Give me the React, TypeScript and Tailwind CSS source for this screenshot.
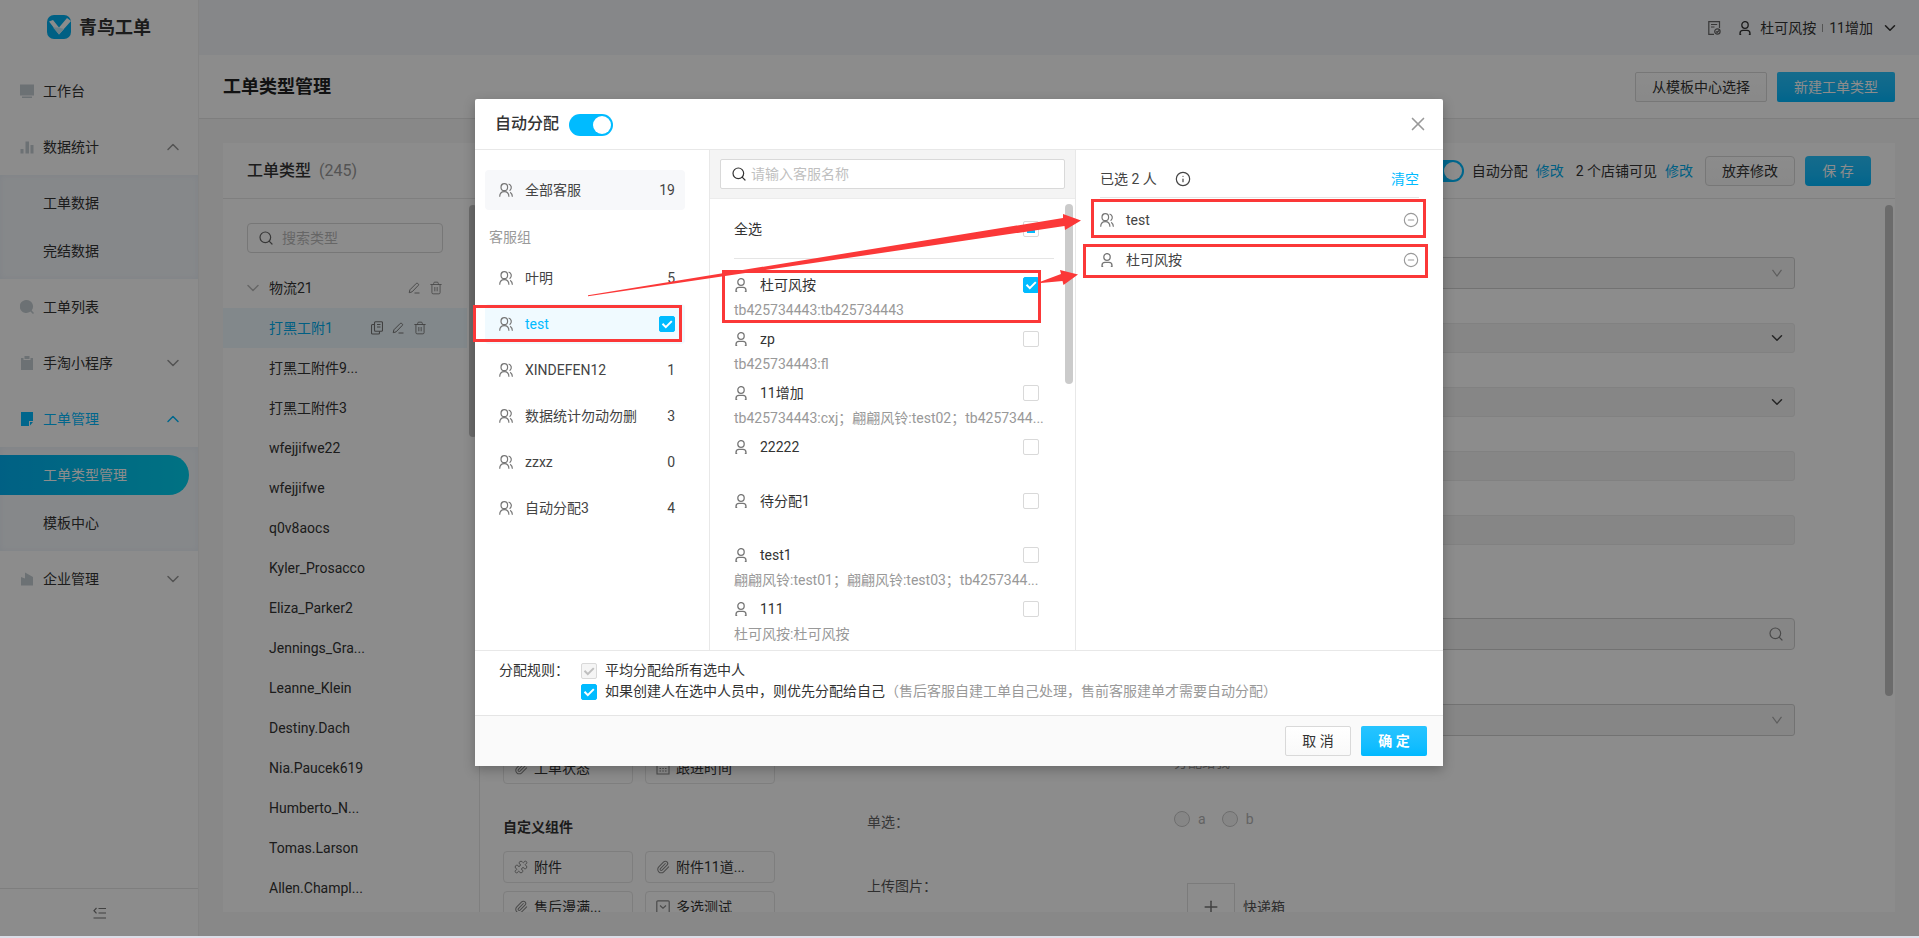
import { useState } from 'react';
import type { ReactNode } from 'react';
import { ChevronDown, ChevronUp, Search, X, Info, CircleMinus, Paperclip, Puzzle, Trash2, Plus } from 'lucide-react';
import clsx from 'clsx';

const typeNames = [
  '打黑工附件9...',
  '打黑工附件3',
  'wfejjifwe22',
  'wfejjifwe',
  'q0v8aocs',
  'Kyler_Prosacco',
  'Eliza_Parker2',
  'Jennings_Gra...',
  'Leanne_Klein',
  'Destiny.Dach',
  'Nia.Paucek619',
  'Humberto_N...',
  'Tomas.Larson',
  'Allen.Champl...',
];

const groups = [
  { name: '叶明', count: 5 },
  { name: 'test', count: 2 },
  { name: 'XINDEFEN12', count: 1 },
  { name: '数据统计勿动勿删', count: 3 },
  { name: 'zzxz', count: 0 },
  { name: '自动分配3', count: 4 },
];

const members = [
  { name: '杜可风按', accounts: 'tb425734443:tb425734443' },
  { name: 'zp', accounts: 'tb425734443:fl' },
  { name: '11增加', accounts: 'tb425734443:cxj；翩翩风铃:test02；tb4257344...' },
  { name: '22222', accounts: '' },
  { name: '待分配1', accounts: '' },
  { name: 'test1', accounts: '翩翩风铃:test01；翩翩风铃:test03；tb4257344...' },
  { name: '111', accounts: '杜可风按:杜可风按' },
];

function UserIcon({ className }: { className?: string }) {
  return (
    <svg viewBox="0 0 14 14" fill="none" stroke="currentColor" strokeWidth="1.3" className={clsx('w-[14px] h-[14px] shrink-0', className)}>
      <ellipse cx="7" cy="4" rx="3.2" ry="3.4" />
      <path d="M3.2 13.4H2v-1C2 10.300 3.200 9.400 5 9.400h4c1.800 0 3 .9 3 3v1h-1.200" />
    </svg>
  );
}

function UsersIcon({ className }: { className?: string }) {
  return (
    <svg viewBox="0 0 14 14" fill="none" stroke="currentColor" strokeWidth="1.200" className={clsx('w-[14px] h-[14px] shrink-0', className)}>
      <ellipse cx="5.300" cy="4.200" rx="3.300" ry="3.500" />
      <path d="M.7 13.800c0-3.400 2-5.200 4.600-5.200s4.600 1.800 4.600 5.200" />
      <path d="M9.600 1c3 1 3.800 4.200 1 6.700M11.200 9.200c1.400 1 2.100 2.500 2.200 4.600" />
    </svg>
  );
}

function PenIcon() {
  return (
    <svg viewBox="0 0 12 12" fill="none" stroke="currentColor" strokeWidth="1" className="w-3 h-3">
      <path d="M1.200 10.700l.7-2.900L8.300 1.400a1 1 0 011.400 0l.6.6a1 1 0 010 1.400L4 9.900zM6.500 11h5" />
    </svg>
  );
}

function CopyIcon() {
  return (
    <svg viewBox="0 0 12 14" fill="none" stroke="currentColor" strokeWidth="1.100" className="w-3 h-[14px]">
      <rect x="3.500" y=".8" width="8" height="9.500" rx="1" />
      <path d="M3.500 3.500h-2a1 1 0 00-1 1V12a1 1 0 001 1h6a1 1 0 001-1v-1.700M6 3.500h3.500M6 6h3.500" />
    </svg>
  );
}

function Checkbox({ label, checked = false, disabled = false, partial = false }: { label: string; checked?: boolean; disabled?: boolean; partial?: boolean }) {
  return (
    <span className="grid w-4 h-4 shrink-0 place-items-center">
      <input
        type="checkbox"
        aria-label={label}
        defaultChecked={checked}
        disabled={disabled}
        className="peer appearance-none col-start-1 row-start-1 w-4 h-4 rounded-[2px] border border-[#d9d9d9] bg-white checked:bg-[#00bbff] checked:border-[#00bbff] disabled:bg-[#f5f5f5] disabled:border-[#d9d9d9]"
      />
      {partial && <span className="col-start-1 row-start-1 w-2 h-2 bg-[#00bbff]" />}
      <svg viewBox="0 0 16 16" fill="none" stroke="currentColor" strokeWidth="2" className={clsx('pointer-events-none col-start-1 row-start-1 hidden w-4 h-4 peer-checked:block', disabled ? 'text-[#bfbfbf]' : 'text-white')}>
        <path d="M3.500 7.800l3.300 3.300 6-6" />
      </svg>
    </span>
  );
}

function Switch({ label }: { label: string }) {
  return (
    <input
      type="checkbox"
      role="switch"
      aria-label={label}
      defaultChecked
      className="appearance-none flex items-center justify-end w-11 h-[22px] shrink-0 rounded-full bg-[#00bbff] pr-[2px] before:block before:w-[18px] before:h-[18px] before:rounded-full before:bg-white before:content-['']"
    />
  );
}

function DefaultButton({ children, className }: { children: ReactNode; className?: string }) {
  return (
    <button className={clsx('h-[30px] rounded-[2px] border border-[#d9d9d9] bg-linear-to-b from-white to-[#f9f9f9] text-[#333]', className)}>
      {children}
    </button>
  );
}

function PrimaryButton({ children, className }: { children: ReactNode; className?: string }) {
  return (
    <button className={clsx('h-[30px] rounded-[2px] bg-linear-to-b from-[#26c4ff] to-[#00b9ff] text-white', className)}>
      {children}
    </button>
  );
}

function MenuItem({ icon, text, chevron, active }: { icon: ReactNode; text: string; chevron?: 'up' | 'down'; active?: boolean }) {
  return (
    <a href="#" className={clsx('flex h-14 items-center gap-[9px] pl-5 pr-[15px]', active ? 'text-[#00bbff]' : 'text-[#333]')}>
      <svg viewBox="0 0 14 14" fill="currentColor" className={clsx('w-[14px] h-[14px]', !active && 'text-[#c5ced3]')}>
        {icon}
      </svg>
      <span className="flex-1">{text}</span>
      {chevron === 'up' && <ChevronUp className={clsx('w-5 h-5', !active && 'text-[#999]')} strokeWidth={1.8} />}
      {chevron === 'down' && <ChevronDown className="w-5 h-5 text-[#999]" strokeWidth={1.8} />}
    </a>
  );
}

function SubMenu({ items, active }: { items: string[]; active?: string }) {
  return (
    <div className="bg-[#f5f8fc] py-1 shadow-[inset_0_0_6px_#e6eef5]">
      {items.map(item => (
        <div key={item} className="flex h-12 items-center">
          <a
            href="#"
            className={clsx(
              'flex h-10 w-[189px] items-center pl-[43px]',
              item === active ? 'rounded-r-full bg-linear-to-r from-[#00b0f0] to-[#00d0ee] text-white' : 'text-[#333]'
            )}
          >
            {item}
          </a>
        </div>
      ))}
    </div>
  );
}

function Sidebar() {
  return (
    <aside className="flex w-[199px] shrink-0 flex-col border-r border-[#f0f0f0] bg-white">
      <div className="flex h-[63px] items-start gap-2 pl-[47px] pt-[15px]">
        <svg viewBox="0 0 24 24" className="w-6 h-6">
          <rect width="24" height="24" rx="7" fill="#00b0f0" />
          <path d="M2 6.500L6 5l6 7.500L20 3l4 3-12 13.500z" fill="#fff" />
          <path d="M6 12.500l6 7 5-5.500-5-1.500z" fill="#c5e9f7" />
        </svg>
        <span className="text-lg/[26px] font-bold text-[#333]">青鸟工单</span>
      </div>
      <nav className="flex-1">
        <MenuItem text="工作台" icon={<path d="M0 .5h14v11H0zM2 12.500h10v1.500H2z" />} />
        <MenuItem text="数据统计" chevron="up" icon={<path d="M.5 9h3v4.500h-3zM5.500 1.500H9v12H5.500zM10.500 5H13.500v8.500h-3z" />} />
        <SubMenu items={['工单数据', '完结数据']} />
        <MenuItem text="工单列表" icon={<path d="M6.500 0a6.500 6.500 0 015.200 10.400L14 12.900l-1 1-2.600-2.400A6.500 6.500 0 116.500 0z" />} />
        <MenuItem text="手淘小程序" chevron="down" icon={<path d="M1 2h2.500v2h7V2H13v12H1zM4.500 0h5v3h-5z" />} />
        <MenuItem text="工单管理" chevron="up" active icon={<path d="M1 0h12v9H9v5H1zM10 10h3l-3 3.500z" />} />
        <SubMenu items={['工单类型管理', '模板中心']} active="工单类型管理" />
        <MenuItem text="企业管理" chevron="down" icon={<path d="M1 5l4 1.500V.5L13 5v8.500H1z" />} />
      </nav>
      <div className="flex h-12 items-center justify-center border-t border-[#e5e5e5]">
        <button aria-label="收起菜单">
          <svg viewBox="0 0 13 12" fill="none" stroke="#777" strokeWidth="1.200" className="w-[13px] h-3">
            <path d="M5.500 1.500H13M5.500 6H13M.5 11H13M3.500 1L1 3.700l2.500 2.700" />
          </svg>
        </button>
      </div>
    </aside>
  );
}

function TopBar() {
  return (
    <header className="flex h-[55px] shrink-0 items-center justify-end bg-[#f4f6f9] pr-5 text-[#333]">
      <svg viewBox="0 0 13 14" fill="none" stroke="#666" strokeWidth="1.200" className="mr-[17px] w-[13px] h-[14px]">
        <path d="M6 13.300H.8V.7h10.700V7M3 3.500h6.200M3 6h3.500" />
        <circle cx="9.400" cy="10.500" r="2.700" />
        <path d="M8 10.500l1.200 1 1.800-2" />
      </svg>
      <UserIcon className="mr-2" />
      <button className="flex items-center">
        <span>杜可风按</span>
        <span className="mx-[6px] h-2 w-px bg-[#999]" />
        <span>11增加</span>
        <ChevronDown className="ml-2 w-[18px] h-[18px]" />
      </button>
    </header>
  );
}

function TypeList() {
  return (
    <section className="flex w-[257px] shrink-0 flex-col border-r border-[#e8e8e8]">
      <h2 className="flex h-14 shrink-0 items-center gap-2 border-b border-[#e8e8e8] pl-6 text-base font-medium text-[#333]">
        工单类型 <span className="font-normal text-[#999]">(245)</span>
      </h2>
      <div className="flex min-h-0 flex-1">
        <div className="w-[244px] shrink-0 pt-6">
          <div className="mx-6 flex h-[30px] items-center gap-2 rounded-sm border border-[#d9d9d9] pl-[10px]">
            <Search className="w-4 h-4 shrink-0 text-[#666]" strokeWidth={1.8} />
            <input aria-label="搜索类型" placeholder="搜索类型" className="w-full min-w-0 outline-none placeholder:text-[#bbb]" />
          </div>
          <div className="mt-[15px] flex h-10 items-center pl-5">
            <ChevronDown className="mr-[6px] w-5 h-5 text-[#bbb]" strokeWidth={1.8} />
            <span className="flex-1 text-[#333]">物流21</span>
            <span className="mr-6 flex items-center gap-[9px] text-[#888]">
              <button aria-label="编辑"><PenIcon /></button>
              <button aria-label="删除"><Trash2 className="w-[14px] h-[14px]" strokeWidth={1.5} /></button>
            </span>
          </div>
          <ul className="text-[#333]">
            <li className="flex h-10 items-center bg-[#edf8fd] pl-[46px]">
              <a href="#" className="flex-1 text-[#00aeef]">打黑工附1</a>
              <span className="mr-10 flex items-center gap-[9px] text-[#777]">
                <button aria-label="复制"><CopyIcon /></button>
                <button aria-label="编辑"><PenIcon /></button>
                <button aria-label="删除"><Trash2 className="w-[14px] h-[14px]" strokeWidth={1.5} /></button>
              </span>
            </li>
            {typeNames.map(name => (
              <li key={name} className="flex h-10 items-center pl-[46px]">
                <a href="#">{name}</a>
              </li>
            ))}
          </ul>
        </div>
        <div className="ml-[2px] mt-[6px] h-[232px] w-2 rounded-full bg-[#c4c4c4]" />
      </div>
    </section>
  );
}

function ComponentTile({ icon, text }: { icon: ReactNode; text: string }) {
  return (
    <button className="flex h-8 items-center gap-[6px] rounded-sm border border-[#e5e5e5] pl-[10px] text-[#333]">
      <span className="text-[#888]">{icon}</span>
      {text}
    </button>
  );
}

function ComponentPanel() {
  const clip = <Paperclip className="w-[14px] h-[14px]" strokeWidth={1.8} />;
  return (
    <div className="w-80 shrink-0 overflow-hidden pl-[23px] pt-[553px]">
      <div className="grid grid-cols-[130px_130px] gap-x-3 gap-y-2">
        <ComponentTile icon={clip} text="工单状态" />
        <ComponentTile
          text="跟进时间"
          icon={
            <svg viewBox="0 0 14 14" fill="none" stroke="currentColor" strokeWidth="1.100" className="w-[14px] h-[14px]">
              <path d="M1 1.500h12v11.500H1zM1 4.500h12M3.500 7.500H5M6.300 7.500h1.500M9 7.500h1.500M3.500 10H5M6.300 10h1.500M9 10h1.500" />
            </svg>
          }
        />
      </div>
      <h3 className="mb-[13px] mt-8 leading-[22px] font-bold text-[#333]">自定义组件</h3>
      <div className="grid grid-cols-[130px_130px] gap-x-3 gap-y-2">
        <ComponentTile icon={<Puzzle className="w-[14px] h-[14px]" strokeWidth={1.7} />} text="附件" />
        <ComponentTile icon={clip} text="附件11道..." />
        <ComponentTile icon={clip} text="售后漫满..." />
        <ComponentTile
          text="多选测试"
          icon={
            <svg viewBox="0 0 14 14" fill="none" stroke="currentColor" strokeWidth="1.200" className="w-[14px] h-[14px]">
              <rect x=".8" y=".8" width="12.400" height="12.400" rx="1" />
              <path d="M4 5.500l3 2.700 3-2.700" />
            </svg>
          }
        />
      </div>
    </div>
  );
}

function FormSelect({ label, strong }: { label: string; strong?: boolean }) {
  return (
    <div className="grid items-center">
      <select
        aria-label={label}
        disabled
        className={clsx(
          'col-start-1 row-start-1 w-full appearance-none rounded-[3px] border bg-[#f5f5f5] opacity-100',
          strong ? 'h-8 border-[#d0d0d0]' : 'h-[30px] border-[#ebebeb]'
        )}
      />
      {strong ? (
        <svg viewBox="0 0 10 8" fill="none" stroke="#aaa" strokeWidth="1.200" className="col-start-1 row-start-1 mr-[13px] w-[10px] h-2 justify-self-end">
          <path d="M.5.8L5 7 9.500.8" />
        </svg>
      ) : (
        <ChevronDown className="col-start-1 row-start-1 mr-[9px] w-[18px] h-[18px] justify-self-end text-[#444]" />
      )}
    </div>
  );
}

function PreviewForm() {
  return (
    <form className="flex min-w-0 flex-1 flex-col overflow-hidden pl-[67px] pr-[90px] pt-[58px]">
      <div className="ml-[307px] flex flex-col gap-[34px]">
        <FormSelect label="店铺" strong />
        <FormSelect label="类型" />
        <FormSelect label="状态" />
        <input aria-label="昵称" disabled className="h-[30px] rounded-[3px] border border-[#ebebeb] bg-[#f5f5f5]" />
        <input aria-label="单号" disabled className="h-[30px] rounded-[3px] border border-[#ebebeb] bg-[#f5f5f5]" />
      </div>
      <div className="ml-[307px] mt-[73px] flex flex-col gap-[54px]">
        <div className="flex h-8 items-center rounded-sm border border-[#d0d0d0] bg-[#f5f5f5] pr-[10px]">
          <input aria-label="搜索" disabled className="min-w-0 flex-1" />
          <Search className="w-4 h-4 text-[#888]" strokeWidth={1.8} />
        </div>
        <FormSelect label="分配" strong />
      </div>
      <p className="ml-[307px] mt-[15px] leading-[22px] text-[#999]">分配给我</p>
      <div className="mt-[38px] flex text-[#666]">
        <span className="w-[307px] shrink-0 leading-[22px]">单选：</span>
        <div className="flex h-4 items-center gap-4 text-[#b5b5b5]">
          {['a', 'b'].map(option => (
            <label key={option} className="flex items-center gap-2">
              <input type="radio" name="single" disabled className="appearance-none w-4 h-4 rounded-full border border-[#c8c8c8] bg-[#f5f5f5]" />
              {option}
            </label>
          ))}
        </div>
      </div>
      <div className="mt-[42px] flex text-[#555]">
        <span className="w-80 shrink-0 leading-[22px]">上传图片：</span>
        <div className="flex items-center gap-2 pt-2">
          <button type="button" aria-label="上传" className="grid w-12 h-12 place-items-center border border-[#e0e0e0]">
            <Plus className="w-5 h-5 text-[#777]" strokeWidth={1.8} />
          </button>
          快递箱
        </div>
      </div>
    </form>
  );
}

function Workspace() {
  return (
    <div className="flex min-w-0 flex-1 flex-col bg-[#f7f7f7]">
      <TopBar />
      <div className="flex h-16 shrink-0 items-center gap-[10px] border-b border-[#e5e5e5] bg-white px-6">
        <h1 className="flex-1 text-lg font-bold text-[#222]">工单类型管理</h1>
        <DefaultButton className="w-[132px]">从模板中心选择</DefaultButton>
        <PrimaryButton className="w-[118px]">新建工单类型</PrimaryButton>
      </div>
      <div className="flex min-h-0 flex-1 p-6">
        <div className="flex min-w-0 flex-1 overflow-hidden bg-white">
          <TypeList />
          <section className="flex min-w-0 flex-1 flex-col">
            <div className="flex h-14 shrink-0 items-center justify-end border-b border-[#e8e8e8] pr-6 text-[#333]">
              <Switch label="自动分配" />
              <span className="ml-2">自动分配</span>
              <a href="#" className="ml-2 text-[#00aeef]">修改</a>
              <span className="ml-3">2 个店铺可见</span>
              <a href="#" className="ml-2 text-[#00aeef]">修改</a>
              <DefaultButton className="ml-3 w-[90px] rounded-sm">放弃修改</DefaultButton>
              <PrimaryButton className="ml-[10px] w-[66px] rounded-sm">保 存</PrimaryButton>
            </div>
            <div className="flex min-h-0 flex-1">
              <ComponentPanel />
              <PreviewForm />
              <div className="mr-[2px] mt-[6px] h-[491px] w-2 rounded-full bg-[#c4c4c4]" />
            </div>
          </section>
        </div>
      </div>
    </div>
  );
}

function GroupColumn() {
  return (
    <div className="w-[235px] shrink-0 border-r border-[#e8e8e8] pl-[10px] pt-5 text-[#444]">
      <button className="flex h-10 w-[200px] items-center rounded-sm bg-[#f7f8fa] px-[10px]">
        <UsersIcon className="ml-1 mr-3 text-[#777]" />
        <span className="flex-1 text-left">全部客服</span>
        <span>19</span>
      </button>
      <h3 className="ml-1 mt-4 leading-[22px] text-[#999]">客服组</h3>
      <ul className="mt-[10px] flex flex-col gap-[6px]">
        {groups.map(group => (
          <li key={group.name} className={clsx('flex h-10 w-[200px] items-center rounded-sm px-[10px]', group.name === 'test' && 'bg-[#f0faff]')}>
            <UsersIcon className="ml-1 mr-3 text-[#777]" />
            <span className={clsx('flex-1', group.name === 'test' && 'text-[#00bbff]')}>{group.name}</span>
            {group.name === 'test' ? <Checkbox label={group.name} checked /> : <span>{group.count}</span>}
          </li>
        ))}
      </ul>
    </div>
  );
}

function MemberColumn() {
  return (
    <div className="flex w-[366px] shrink-0 flex-col border-r border-[#e8e8e8]">
      <div className="h-[49px] shrink-0 border-b border-[#ececec] bg-[#f4f4f4] px-[10px] pt-[9px]">
        <div className="flex h-[30px] items-center gap-1 rounded-[2px] border border-[#d9d9d9] bg-white pl-[10px]">
          <Search className="w-4 h-4 shrink-0 text-[#333]" strokeWidth={1.8} />
          <input aria-label="请输入客服名称" placeholder="请输入客服名称" className="w-full min-w-0 outline-none placeholder:text-[#bfbfbf]" />
        </div>
      </div>
      <div className="flex min-h-0 flex-1">
        <div className="ml-6 w-80 shrink-0">
          <div className="flex h-[60px] items-center justify-between border-b border-[#e5e5e5] pr-[15px]">
            <span className="text-[#333]">全选</span>
            <Checkbox label="全选" partial />
          </div>
          <ul className="pt-3">
            {members.map((member, index) => (
              <li key={member.name} className="h-[54px] pr-[15px]">
                <div className="flex h-7 items-center">
                  <UserIcon className="mr-3 text-[#777]" />
                  <span className="flex-1 text-[#333]">{member.name}</span>
                  <Checkbox label={member.name} checked={index === 0} />
                </div>
                <p className="whitespace-nowrap leading-[22px] text-[#999]">{member.accounts}</p>
              </li>
            ))}
          </ul>
        </div>
        <div className="ml-[11px] mt-[5px] h-[180px] w-2 rounded-full bg-[#cbcbcb]" />
      </div>
    </div>
  );
}

function SelectedColumn() {
  return (
    <div className="min-w-0 flex-1 px-6 text-[#444]">
      <div className="flex h-12 items-end border-b border-[#e5e5e5] pb-[7px] leading-[22px]">
        <span>已选 2 人</span>
        <Info className="mb-[3px] ml-[18px] w-4 h-4" strokeWidth={1.8} />
        <button className="ml-auto text-[#00bbff]">清空</button>
      </div>
      <ul className="pt-[2px]">
        <li className="flex h-10 items-center">
          <UsersIcon className="mr-3 text-[#777]" />
          <span className="flex-1">test</span>
          <button aria-label="移除 test"><CircleMinus className="w-4 h-4 text-[#999]" strokeWidth={1.7} /></button>
        </li>
        <li className="flex h-10 items-center">
          <UserIcon className="mr-3 text-[#777]" />
          <span className="flex-1">杜可风按</span>
          <button aria-label="移除 杜可风按"><CircleMinus className="w-4 h-4 text-[#999]" strokeWidth={1.7} /></button>
        </li>
      </ul>
    </div>
  );
}

// red marker boxes and arrows that lie over the dialog
function Annotations() {
  return (
    <svg viewBox="0 0 968 667" className="pointer-events-none absolute left-0 top-0 w-[968px] h-[667px] overflow-visible">
      <g fill="none" stroke="#fb3838" strokeWidth="3">
        <rect x="-.5" y="207.500" width="206" height="34" />
        <rect x="248.500" y="172.500" width="316" height="50" />
        <rect x="617.500" y="101.500" width="332" height="36" />
        <rect x="609.500" y="146.500" width="342" height="31" />
      </g>
      <g fill="#fb3838">
        <path d="M113 196.200L588 119v-4l18 6.500-16 9.500-.5-4L113 197.200z" />
        <path d="M566 182.500l20-7.500-1-4 18 4.500-14.500 10.500-1-4-21.500 2z" />
      </g>
    </svg>
  );
}

function AssignDialog({ onClose }: { onClose: () => void }) {
  return (
    <div role="dialog" aria-label="自动分配" className="relative flex h-[667px] w-[968px] flex-col rounded-[2px] bg-white shadow-[0_4px_12px_rgba(0,0,0,0.25)]">
      <div className="flex h-[51px] shrink-0 items-center border-b border-[#e8e8e8] pl-5 pr-[14px]">
        <h2 className="text-base font-medium text-[#333]">自动分配</h2>
        <span className="ml-[10px] mt-[2px] flex"><Switch label="自动分配" /></span>
        <button aria-label="关闭" onClick={onClose} className="ml-auto">
          <X className="w-[22px] h-[22px] text-[#999]" strokeWidth={1.8} />
        </button>
      </div>
      <div className="flex min-h-0 flex-1">
        <GroupColumn />
        <MemberColumn />
        <SelectedColumn />
      </div>
      <div className="flex h-[65px] shrink-0 border-t border-[#e8e8e8] pl-6 pt-[9px] leading-[21px] text-[#333]">
        <span className="w-[82px]">分配规则：</span>
        <div>
          <label className="flex items-center gap-2">
            <Checkbox label="平均分配给所有选中人" checked disabled />
            平均分配给所有选中人
          </label>
          <label className="flex items-center gap-2">
            <Checkbox label="优先分配给自己" checked />
            <span>
              如果创建人在选中人员中，则优先分配给自己
              <span className="text-[#999]">（售后客服自建工单自己处理，售前客服建单才需要自动分配）</span>
            </span>
          </label>
        </div>
      </div>
      <div className="flex h-[51px] shrink-0 items-center justify-end gap-[10px] border-t border-[#e5e5e5] bg-[#fafafa] pr-4">
        <DefaultButton className="w-[66px]">取 消</DefaultButton>
        <PrimaryButton className="w-[66px] font-bold">确 定</PrimaryButton>
      </div>
      <Annotations />
    </div>
  );
}

export default function App() {
  const [open, setOpen] = useState(true);

  return (
    <div className="flex h-screen flex-col overflow-hidden bg-[#dcdee8] pb-[2px] font-[Roboto,'Noto_Sans_CJK_SC',sans-serif] text-sm">
      <div className="relative flex min-h-0 flex-1">
        <Sidebar />
        <Workspace />
        {open && (
          <div className="absolute inset-0 flex items-start justify-center bg-black/45 pr-px pt-[99px]">
            <AssignDialog onClose={() => setOpen(false)} />
          </div>
        )}
      </div>
    </div>
  );
}
